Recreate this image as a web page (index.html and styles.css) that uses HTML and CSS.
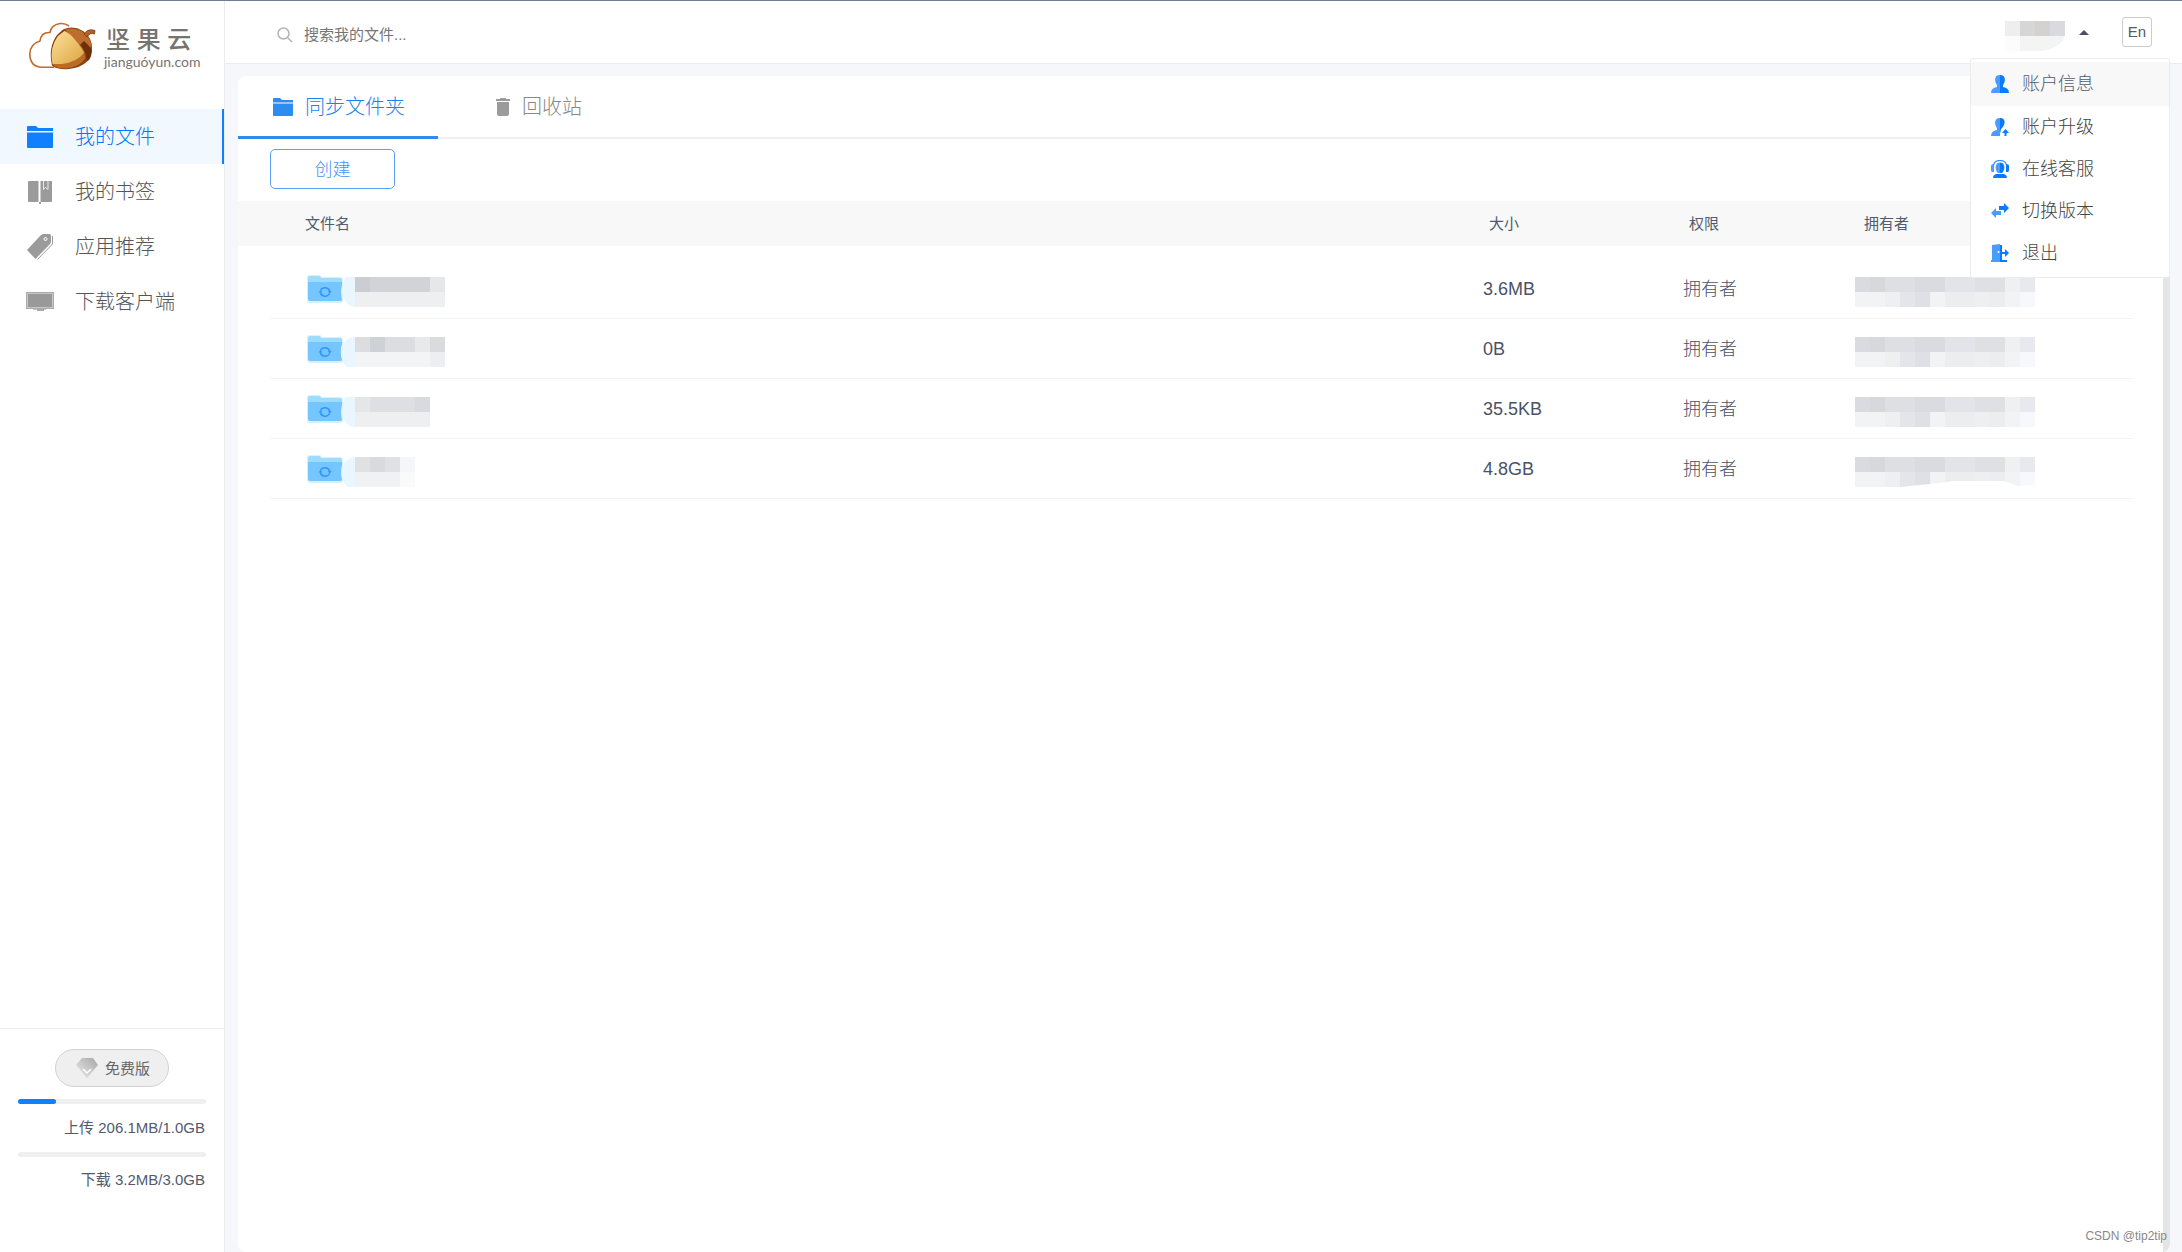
FILE: index.html
```html
<!DOCTYPE html>
<html lang="zh-CN">
<head>
<meta charset="utf-8">
<title>坚果云</title>
<link rel="stylesheet" href="styles.css">
</head>
<body>
<svg class="defs" aria-hidden="true">
  <defs>
    <linearGradient id="nut" x1="0" y1="0" x2="1" y2="1"><stop offset="0" stop-color="#ffe09a"/><stop offset="1" stop-color="#dba544"/></linearGradient>
    <linearGradient id="gem" x1="0" y1="1" x2="1" y2="0"><stop offset=".2" stop-color="#dedede"/><stop offset="1" stop-color="#a6a6a6"/></linearGradient>
    <symbol id="sync-folder" viewBox="0 0 36 28">
      <path d="M0 3Q0 0 3 0H12Q14 0 15 2H33Q36 2 36 5V25Q36 28 33 28H3Q0 28 0 25Z" fill="#d5f0ff"/>
      <path d="M1 3Q1 1 3 1H12Q13 1 14 3H33Q35 3 35 5V8H1Z" fill="#9bdcff"/>
      <path d="M1 7H35V10Q33 17 35 25Q35 26 33 26H3Q1 26 1 24Z" fill="#75c6ff"/>
      <g fill="none" stroke="#3294ff" stroke-width="1.400"><path d="M13.500 15.500A5 5 0 0 1 22.800 16.500M22.500 18.500A5 5 0 0 1 13.200 17.500"/></g>
      <path d="M20.800 16.300H24.800L22.800 18.800ZM11.500 17.500H15.500L13.500 15Z" fill="#3294ff"/>
    </symbol>
    <symbol id="owner-blocks" viewBox="0 0 12 2" preserveAspectRatio="none">
      <g shape-rendering="crispEdges">
      <path fill="#dadbe0" d="M0 0h1v1H0zM4 0h2v1H4z"/><path fill="#d7d8dc" d="M1 0h1v1H1z"/><path fill="#dedfe3" d="M2 0h2v1H2z"/>
      <path fill="#e3e4e9" d="M6 0h2v1H6z"/><path fill="#dfe0e4" d="M8 0h2v1H8z"/><path fill="#eff0f2" d="M10 0h1v1h-1z"/><path fill="#e8e9ee" d="M11 0h1v1h-1z"/>
      <path fill="#f2f3f5" d="M0 1h2v1H0zM5 1h1v1H5zM10 1h1v1h-1z"/><path fill="#eeeff1" d="M2 1h1v1H2zM8 1h1v1H8z"/><path fill="#e4e5ea" d="M3 1h1v1H3z"/>
      <path fill="#dfe0e5" d="M4 1h1v1H4z"/><path fill="#ecedef" d="M6 1h2v1H6zM9 1h1v1H9z"/><path fill="#f7f8fb" d="M11 1h1v1h-1z"/>
      </g>
    </symbol>
  </defs>
</svg>

<div class="app">
  <aside class="sidebar">
    <a class="logo" href="#" aria-label="坚果云">
      <svg width="68" height="50" viewBox="29 21 68 50">
        <path d="M69 26Q65 23 60 23.500Q51 25 50 32.500Q41 32 40 41Q30 44 29.800 54Q30 67 42 67.200H54" fill="none" stroke="#c06a2b" stroke-width="1.600"/>
        <path d="M63 29.500Q73 25 83 31Q93 38 92 50Q91.500 59 87 61.500Q81 68 67 69.300Q56 69.500 52 65.500Q48 47 57 35Z" fill="#8a4212"/>
        <path d="M65 29.500Q74 26.500 82 31.500Q90 37 91.500 45L86 55Z" fill="#bd6d2d"/>
        <path d="M84 41Q91 47 91.500 51Q91 59 87 61L86 55Q83 48 80 45Z" fill="#6f2f08"/>
        <path d="M64.500 31Q70 33 76 41Q84 50 85.500 58Q80 67 66 68.500Q57 68.500 53 65Q49 48 58 36Z" fill="#b96c22"/>
        <path d="M64.500 31Q70 33 76 41Q82 48 84 53Q77 62 62 64L52.500 64Q49 48 58 36Z" fill="url(#nut)"/>
        <path d="M84 34Q88 28 95 30.500L94.500 34Q90 32 87 37Z" fill="#b0622a" stroke="#7c3710" stroke-width=".8"/>
      </svg>
      <span class="brand"><strong>坚 果 云</strong><small>jianguóyun.com</small></span>
    </a>
    <nav class="menu">
      <a class="menu-item current" href="#">
        <svg width="28" height="28"><path d="M1 4Q1 3 2 3H10L12 5H27V8H1Z" fill="#1080ff"/><path d="M1 9.500H27V24Q27 25 26 25H2Q1 25 1 24Z" fill="#1080ff"/></svg>
        <span>我的文件</span>
      </a>
      <a class="menu-item" href="#">
        <svg width="28" height="28"><path d="M2 4Q2 3 3 3H12.500V24H3Q2 24 2 23ZM14.500 3H26V23Q26 24 25 24H14.500Z" fill="#9b9b9b"/><path d="M17.500 3V11.500L19.700 9.500L22 11.500V3" fill="none" stroke="#e8e8e8"/><path d="M13 24H15V26H13Z" fill="#9b9b9b"/></svg>
        <span>我的书签</span>
      </a>
      <a class="menu-item" href="#">
        <svg width="28" height="28"><path d="M1 17L14.500 2.500Q16 1 17 1H23.500Q25 1 25 3V9Q25 10 24 11L9.500 26Z" fill="#9b9b9b"/><circle cx="19.500" cy="6" r="1.500" fill="none" stroke="#fff"/><path d="M26.500 3V11L11.500 26.500" fill="none" stroke="#9b9b9b"/></svg>
        <span>应用推荐</span>
      </a>
      <a class="menu-item" href="#">
        <svg width="28" height="28"><rect x=".5" y="4.500" width="27" height="16" fill="#c8c8c8" stroke="#aaa"/><rect x="2" y="6" width="24" height="13" fill="#999"/><path d="M9 21H20V22H7V21Z" fill="#c8c8c8"/><path d="M11 21H18V23H11Z" fill="#aaa"/></svg>
        <span>下载客户端</span>
      </a>
    </nav>
    <section class="usage">
      <button class="plan" type="button">
        <svg width="22" height="20"><path d="M6 0H17L22 7L11 20L0 7Z" fill="url(#gem)"/><path d="M7 11L11 15L15 11" fill="none" stroke="#fff" stroke-width="1.500"/></svg>
        <span>免费版</span>
      </button>
      <div class="bar"><div class="bar-fill" style="width:20%"></div></div>
      <p>上传 206.1MB/1.0GB</p>
      <div class="bar"><div class="bar-fill" style="width:0%"></div></div>
      <p>下载 3.2MB/3.0GB</p>
    </section>
  </aside>

  <div class="page">
    <header class="topbar">
      <label class="search">
        <svg width="16" height="16" fill="none" stroke="#b5b5b5" stroke-width="1.500"><circle cx="6.500" cy="6.500" r="5.500"/><path d="M10.500 10.500L15 15"/></svg>
        <input type="search" placeholder="搜索我的文件..." aria-label="搜索我的文件">
      </label>
      <div class="account">
        <button class="user" type="button" aria-label="账户">
          <svg width="60" height="32" shape-rendering="crispEdges"><path d="M0 0H15V15H0Z" fill="#eee"/><path d="M15 0H30V15H15Z" fill="#d6d6d6"/><path d="M30 0H45V15H30Z" fill="#d5d1d0"/><path d="M45 0H60V15H45Z" fill="#d9dae0"/><path d="M0 15H15V31Q5 31 0 29Z" fill="#fcfcfc"/><path d="M15 15H60Q56 25 43 29Q30 31 15 30Z" fill="#f4f4f4"/></svg>
          <svg class="caret" width="10" height="5"><path d="M0 5L5 0L10 5Z" fill="#4a5068"/></svg>
        </button>
        <button class="lang" type="button">En</button>
        <div class="dropdown">
          <a class="active" href="#"><svg width="18" height="18"><path d="M9 0C2 0 4 8 6 10V12Q0 13 0 18H9Z" fill="#4a9dff"/><path d="M9 0C16 0 14 8 12 10V12Q18 13 18 18H9Z" fill="#0a7aff"/></svg>账户信息</a>
          <a href="#"><svg width="18" height="18"><path d="M9 0C2 0 4 8 6 10V12Q0 13 0 18H9Z" fill="#4a9dff"/><path d="M9 0C16 0 14 8 10 11L9 16ZM14.500 11L18 15H15.500V18H13.500V15H11Z" fill="#0a7aff"/></svg>账户升级</a>
          <a href="#"><svg width="18" height="18"><path d="M3 4V12H1Q0 12 0 10V6Q0 4 3 4ZM9 2.500C3 2.500 4 11 7 13H9Z" fill="#4a9dff"/><path d="M9 2.500C15 2.500 14 11 11 13H9ZM15 4V12H17Q18 12 18 10V6Q18 4 15 4ZM5 14H13Q16 15 16 18H2Q2 15 5 14Z" fill="#0a7aff"/><path d="M2.500 5C4-1 14-1 15.500 5" fill="none" stroke="#2b8bff" stroke-width="1.200"/></svg>在线客服</a>
          <a href="#"><svg width="18" height="18"><path d="M0 11L5 6V9H10V13H5V16Z" fill="#4a9dff"/><path d="M18 6L13 1V4H8V8H13V11Z" fill="#0a7aff"/></svg>切换版本</a>
          <a href="#"><svg width="18" height="18"><path d="M8 1H11V16H16V18H8Z" fill="#0a7aff"/><path d="M1 1L9 0V18H0V16H1Z" fill="#4a9dff"/><path d="M11 8H14V5L18 9L14 13V10H11Z" fill="#0a7aff"/><circle cx="7.500" cy="8" r="1" fill="#fff"/></svg>退出</a>
        </div>
      </div>
    </header>

    <main class="panel">
      <div class="content">
        <nav class="tabs">
          <a class="tab current" href="#"><svg width="20" height="18"><path d="M0 1Q0 0 1 0H7L9 2H20V4H0Z" fill="#2d8cf0"/><path d="M0 4H20V6H0Z" fill="#9cc3f7"/><path d="M0 6H20V17Q20 18 19 18H1Q0 18 0 17Z" fill="#2d8cf0"/></svg>同步文件夹</a>
          <a class="tab" href="#"><svg width="14" height="18"><path d="M0 1H4V0H10V1H14V3H0ZM1 4H13V16Q13 18 11 18H3Q1 18 1 16Z" fill="#9b9b9b"/></svg>回收站</a>
        </nav>
        <div class="actions"><button class="create" type="button">创建</button></div>
        <table class="files">
          <thead><tr><th class="name">文件名</th><th class="size">大小</th><th class="role">权限</th><th class="owner">拥有者</th></tr></thead>
          <tbody>
            <tr>
              <td class="name"><svg width="140" height="32" role="img" aria-label="文件夹"><use href="#sync-folder" width="36" height="28"/><path d="M48 2H39Q31 16 39 27Q42 32 48 32Z" fill="#e9f6ff"/><g shape-rendering="crispEdges"><path d="M48 2H63V17H48Z" fill="#cacdd2"/><path d="M63 2H123V17H63Z" fill="#d1d3d7"/><path d="M123 2H138V17H123Z" fill="#e6e7e9"/><path d="M48 17H138V32H48Z" fill="#eeeff0"/></g></svg></td>
              <td>3.6MB</td><td>拥有者</td><td><svg width="180" height="32"><use href="#owner-blocks" y="2" width="180" height="30"/></svg></td>
            </tr>
            <tr>
              <td class="name"><svg width="140" height="32" role="img" aria-label="文件夹"><use href="#sync-folder" width="36" height="28"/><path d="M48 2Q32 4 34 20Q36 30 40 32H48Z" fill="#e9f6ff"/><g shape-rendering="crispEdges"><path d="M48 2H108V17H48Z" fill="#dcdde1"/><path d="M63 2H78V17H63Z" fill="#ced1d6"/><path d="M108 2H123V17H108Z" fill="#e8e9eb"/><path d="M123 2H138V17H123Z" fill="#dadbdf"/><path d="M48 17H123V32H48Z" fill="#f3f4f5"/><path d="M123 17H138V32H123Z" fill="#edeef1"/></g></svg></td>
              <td>0B</td><td>拥有者</td><td><svg width="180" height="32"><use href="#owner-blocks" y="2" width="180" height="30"/></svg></td>
            </tr>
            <tr>
              <td class="name"><svg width="140" height="32" role="img" aria-label="文件夹"><use href="#sync-folder" width="36" height="28"/><path d="M48 2H38Q32 18 38 26Q41 32 48 32Z" fill="#e9f6ff"/><g shape-rendering="crispEdges"><path d="M48 2H63V17H48Z" fill="#e5e6e8"/><path d="M63 2H108V17H63Z" fill="#dedfe3"/><path d="M108 2H123V17H108Z" fill="#d9dadf"/><path d="M48 17H123V32H48Z" fill="#eeeff1"/></g></svg></td>
              <td>35.5KB</td><td>拥有者</td><td><svg width="180" height="32"><use href="#owner-blocks" y="2" width="180" height="30"/></svg></td>
            </tr>
            <tr>
              <td class="name"><svg width="140" height="32" role="img" aria-label="文件夹"><use href="#sync-folder" width="36" height="28"/><path d="M48 2Q34 4 35 19Q36 30 41 32H48Z" fill="#e9f6ff"/><g shape-rendering="crispEdges"><path d="M48 2H93V17H48Z" fill="#e0e1e4"/><path d="M63 2H78V17H63Z" fill="#d9dade"/><path d="M93 2H108V17H93Z" fill="#f5f6f9"/><path d="M48 17H93V32H48Z" fill="#f0f1f3"/><path d="M93 17H108V32H93Z" fill="#fafafb"/></g></svg></td>
              <td>4.8GB</td><td>拥有者</td><td><svg width="180" height="32"><use href="#owner-blocks" y="2" width="180" height="30"/><path d="M45 32L75 29L100 26H148L164 31L180 30V32Z" fill="#fff"/></svg></td>
            </tr>
          </tbody>
        </table>
      </div>
      <div class="scrollbar"></div>
      <span class="credit">CSDN @tip2tip</span>
    </main>
  </div>
</div>
</body>
</html>
```
FILE: styles.css
```css
* { box-sizing: border-box; }
body {
  margin: 0;
  background: #f6f7fa;
  color: #515a6e;
  font: 400 15px/20px "Liberation Sans", "Noto Sans CJK SC", sans-serif;
}
a { color: inherit; text-decoration: none; }
button, input { font: inherit; color: inherit; background: none; border: 0; padding: 0; }
svg { display: block; flex: none; }
.defs { position: absolute; width: 0; height: 0; }

.app {
  display: grid;
  grid-template-columns: 225px minmax(0, 1fr);
  min-height: 100vh;
  border-top: 1px solid #717b91;
}

/* Sidebar */
.sidebar {
  display: flex;
  flex-direction: column;
  background: #fff;
  border-right: 1px solid #ebecee;
}
.logo {
  display: flex;
  gap: 7px;
  height: 108px;
  padding: 20px 0 0 29px;
  color: #77736f;
}
.brand { display: flex; flex-direction: column; padding-top: 5px; }
.brand strong { padding-left: 2px; font-size: 24px; font-weight: 500; line-height: 28px; white-space: nowrap; }
.brand small { font: 14px/16px Lato, sans-serif; }
.menu { display: flex; flex-direction: column; }
.menu-item {
  display: flex;
  align-items: center;
  gap: 21px;
  height: 55px;
  padding-left: 26px;
  border-right: 2px solid transparent;
  color: #555;
  font-size: 20px;
  font-weight: 300;
}
.menu-item.current { background: #f2f8ff; border-color: #1080ff; color: #0a75f5; }
.usage {
  display: flex;
  flex-direction: column;
  height: 224px;
  margin-top: auto;
  padding: 20px 18px 0;
  border-top: 1px solid #ebecee;
}
.plan {
  display: flex;
  align-items: center;
  align-self: center;
  gap: 7px;
  height: 38px;
  margin-bottom: 12px;
  padding: 0 18px 0 20px;
  border: 1px solid #d2d2d2;
  border-radius: 19px;
  background: #efefef;
  color: #666;
}
.plan span { padding-top: 2px; }
.bar { height: 5px; border-radius: 3px; background: #efefef; }
.bar-fill { height: 5px; border-radius: 3px; background: #1080ff; }
.usage p { margin: 14px 1px; text-align: right; }
.usage p:last-child { margin-top: 13px; }

/* Top bar */
.page { display: flex; flex-direction: column; }
.topbar {
  display: flex;
  align-items: center;
  justify-content: space-between;
  height: 63px;
  padding: 0 30px 0 52px;
  background: #fff;
  border-bottom: 1px solid #ebecee;
}
.search { display: flex; align-items: center; gap: 11px; padding-top: 5px; }
.search input { width: 300px; outline: 0; }
.search input::placeholder { color: #757575; opacity: 1; }
.account { position: relative; display: flex; align-items: center; gap: 33px; }
.user { display: flex; align-items: flex-start; gap: 14px; padding-top: 10px; }
.caret { margin-top: 9px; }
.lang { width: 30px; height: 30px; border: 1px solid #ccc; border-radius: 3px; }
.dropdown {
  position: absolute;
  z-index: 2;
  top: 47px;
  right: -18px;
  width: 200px;
  padding: 3px 0;
  border: 1px solid #ebecee;
  border-radius: 3px;
  background: #fff;
}
.dropdown a {
  display: flex;
  align-items: center;
  gap: 13px;
  height: 42px;
  padding-left: 20px;
  color: #444;
  font-size: 18px;
  font-weight: 300;
}
.dropdown .active { height: 44px; background: #f8f8f9; color: #515a6e; }

/* File panel */
.panel {
  position: relative;
  display: flex;
  flex: 1;
  margin: 12px 12px 0 13px;
  border-radius: 8px;
  background: #fff;
  overflow: hidden;
}
.content { flex: 1; min-width: 0; }
.scrollbar { width: 7px; background: #e5e5e5; }
.tabs { display: flex; height: 63px; box-shadow: inset 0 -2px #efefef; }
.tab {
  display: flex;
  align-items: center;
  justify-content: center;
  gap: 12px;
  width: 200px;
  padding: 2px 0 0 2px;
  border-bottom: 3px solid transparent;
  color: #888;
  font-size: 20px;
  font-weight: 300;
}
.tab.current { border-color: #2d8cf0; color: #1f80ea; }
.actions { padding: 10px 32px 12px; }
.create {
  display: block;
  width: 125px;
  height: 40px;
  padding-top: 2px;
  border: 1px solid #57a3f9;
  border-radius: 5px;
  color: #4394f8;
  font-size: 18px;
  font-weight: 300;
}
.files { width: 100%; border-collapse: collapse; table-layout: fixed; }
.files th {
  height: 45px;
  padding: 0 0 0 6px;
  background: #f8f8f9;
  font-weight: 400;
  text-align: left;
}
.files .size { width: 200px; }
.files .role { width: 172px; }
.files .owner { width: 308px; padding-left: 9px; }
.files tbody::before { content: ""; display: block; height: 13px; }
.files tbody tr {
  background: linear-gradient(#f4f4f5, #f4f4f5) 32px 100% / calc(100% - 62px) 1px no-repeat;
}
.files td { height: 60px; padding: 0; color: #4a5267; font-size: 18px; font-weight: 300; }
.files th.name { padding-left: 67px; }
.files td.name { padding-left: 69px; }
.files td:has(svg) { padding-top: 4px; }
.credit {
  position: absolute;
  right: 3px;
  bottom: 6px;
  color: #888;
  font-size: 12px;
}
```
